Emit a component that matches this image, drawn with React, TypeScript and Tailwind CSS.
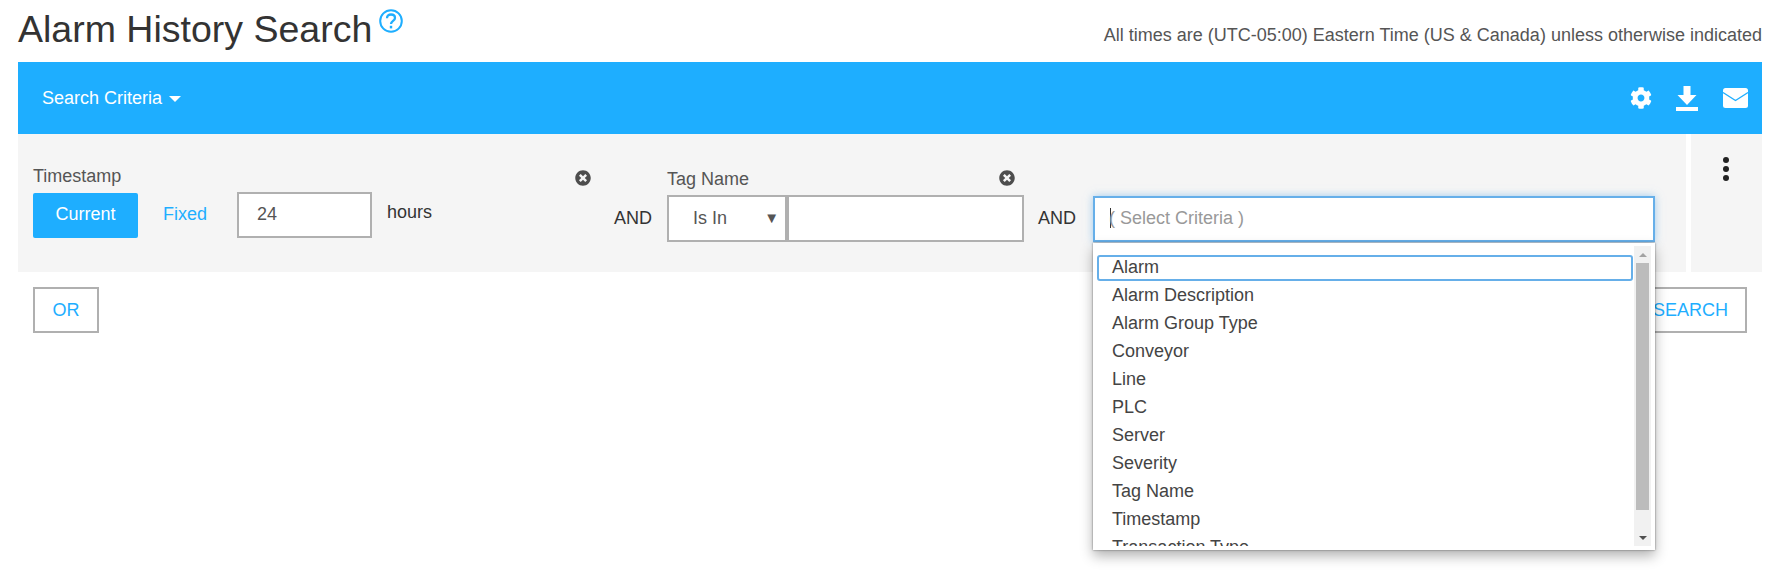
import { FaCog, FaTimesCircle } from "react-icons/fa";

const criteria = [
  "Alarm",
  "Alarm Description",
  "Alarm Group Type",
  "Conveyor",
  "Line",
  "PLC",
  "Server",
  "Severity",
  "Tag Name",
  "Timestamp",
  "Transaction Type",
];

function HelpIcon() {
  return (
    <svg width="24" height="24" viewBox="0 0 24 24" fill="none" stroke="#1eaeff" strokeWidth="2">
      <circle cx="12" cy="12" r="10.8" />
      <path d="M8 9.2c0-2.4 1.8-3.7 4-3.7s4 1.3 4 3.4c0 3-4 3-4 6.1" strokeWidth="2.3" />
      <rect x="10.8" y="16.8" width="2.4" height="2.6" fill="#1eaeff" stroke="none" />
    </svg>
  );
}

function DownloadIcon() {
  return (
    <svg width="22" height="25" viewBox="0 0 22 25" fill="#fff">
      <path d="M7.5 0h7v9h6L11 19 1.500 9h6z" />
      <rect x="0" y="21" width="22" height="4" />
    </svg>
  );
}

function MailIcon() {
  return (
    <svg width="25" height="20" viewBox="0 0 25 20">
      <rect width="25" height="20" rx="2.500" fill="#fff" />
      <path d="M0 4.500l12.500 8 12.500-8" fill="none" stroke="#1eaeff" strokeWidth="1.300" />
    </svg>
  );
}

function CloseButton({ className }: { className: string }) {
  return <FaTimesCircle size={16} className={"absolute text-[#4d4d4d] " + className} />;
}

export default function App() {
  return (
    <div className="min-h-screen bg-white px-[18px] font-['Liberation_Sans',Arial,sans-serif] text-[18px] text-[#333]">
      <header className="flex h-[62px] items-start justify-between">
        <div className="flex items-start">
          <h1 className="mt-[9px] text-[37.500px] leading-[40px] font-normal">Alarm History Search</h1>
          <span className="mt-[9px] ml-[7px]">
            <HelpIcon />
          </span>
        </div>
        <p className="mt-[25px] leading-[20px] text-[#555]">
          All times are (UTC-05:00) Eastern Time (US &amp; Canada) unless otherwise indicated
        </p>
      </header>

      <div className="flex h-[72px] items-center justify-between bg-[#1eaeff] pr-[14px] pl-[24px] text-white">
        <button className="flex items-center gap-[7px]">
          Search Criteria
          <span className="mt-[1px] border-x-[6px] border-t-[6px] border-x-transparent border-t-white" />
        </button>
        <div className="flex items-center">
          <FaCog size={22} className="mr-[24px]" />
          <span className="mr-[25px]">
            <DownloadIcon />
          </span>
          <MailIcon />
        </div>
      </div>

      <div className="flex h-[138px] gap-[5px]">
        <div className="flex flex-1 items-start bg-[#f5f5f5] pt-[33px] pl-[15px]">
          {/* timestamp filter */}
          <div className="relative w-[557px]">
            <CloseButton className="top-[3px] right-[-1px]" />
            <div className="mt-[-3px] h-[28px] leading-[24px] text-[#555]">Timestamp</div>
            <div className="flex items-center">
              <button className="h-[45px] w-[105px] rounded-[2px] bg-[#1eaeff] pb-[2px] text-white">Current</button>
              <button className="ml-[25px] pb-[2px] text-[#1eaeff]">Fixed</button>
              <input
                readOnly
                value="24"
                className="ml-[30px] h-[46px] w-[135px] border-2 border-[#b0b0b0] bg-white px-[18px] pb-[2px] text-[#555] outline-none"
              />
              <span className="mb-[5px] ml-[15px]">hours</span>
            </div>
          </div>

          <span className="mt-[41px] ml-[24px] leading-[20px]">AND</span>

          {/* tag name filter */}
          <div className="relative ml-[15px] w-[357px]">
            <CloseButton className="top-[3px] right-[9px]" />
            <div className="h-[28px] leading-[24px] text-[#555]">Tag Name</div>
            <div className="flex h-[47px]">
              <div className="flex w-[120px] items-center justify-between border-2 border-[#b0b0b0] bg-white pr-[6px] pl-[24px] text-[#555]">
                Is In
                <span className="text-[15px]">▼</span>
              </div>
              <input readOnly className="w-[237px] border-2 border-[#b0b0b0] bg-white outline-none" />
            </div>
          </div>

          <span className="mt-[41px] ml-[14px] leading-[20px]">AND</span>

          {/* new criteria picker */}
          <div className="relative z-10 mt-[29px] ml-[17px] w-[562px]">
            <div className="flex h-[46px] items-center border-2 border-[#66afe9] bg-white pb-[2px] pl-[15px] text-[#999] shadow-[0_0_8px_rgba(102,175,233,0.6)]">
              <span className="mr-[-1px] h-[20px] w-px bg-[#333]" />
              <span className="ml-[-1px]">( Select Criteria )</span>
            </div>
            <div className="absolute top-[47px] left-0 flex h-[307px] w-[562px] bg-white p-[3px] pr-[4px] shadow-[0_6px_12px_rgba(0,0,0,0.3),0_0_2px_rgba(0,0,0,0.5)]">
              <ul className="h-[300px] flex-1 overflow-hidden pt-[9px] pr-[1px] pl-[1px]">
                {criteria.map((item, i) => (
                  <li
                    key={item}
                    className={
                      "flex items-center rounded-[3px] leading-[20px] text-[#444] " +
                      (i === 0
                        ? "h-[26px] border-2 border-[#66afe9] pb-[2px] pl-[13px]"
                        : "h-[28px] pb-[1px] pl-[15px]")
                    }
                  >
                    {item}
                  </li>
                ))}
              </ul>
              <div className="flex h-[300px] w-[17px] flex-col items-center bg-[#f1f1f1]">
                <div className="flex h-[17px] w-full items-center justify-center">
                  <span className="border-x-[4px] border-b-[4px] border-x-transparent border-b-[#a3a3a3]" />
                </div>
                <div className="h-[247px] w-[13px] bg-[#bcbcbc]" />
                <div className="flex-1" />
                <div className="flex h-[17px] w-full items-center justify-center">
                  <span className="border-x-[4px] border-t-[4px] border-x-transparent border-t-[#505050]" />
                </div>
              </div>
            </div>
          </div>
        </div>

        <div className="flex w-[71px] justify-center bg-[#f5f5f5] pt-[23px] pr-[1px]">
          <div className="flex flex-col gap-[3px]">
            <span className="size-[6px] rounded-full bg-[#222]" />
            <span className="size-[6px] rounded-full bg-[#222]" />
            <span className="size-[6px] rounded-full bg-[#222]" />
          </div>
        </div>
      </div>

      <div className="mt-[15px] flex justify-between pr-[15px] pl-[15px]">
        <button className="h-[46px] w-[66px] border-2 border-[#b0b0b0] text-[#1eaeff]">OR</button>
        <button className="h-[46px] w-[113px] border-2 border-[#b0b0b0] text-[#1eaeff]">SEARCH</button>
      </div>
    </div>
  );
}
